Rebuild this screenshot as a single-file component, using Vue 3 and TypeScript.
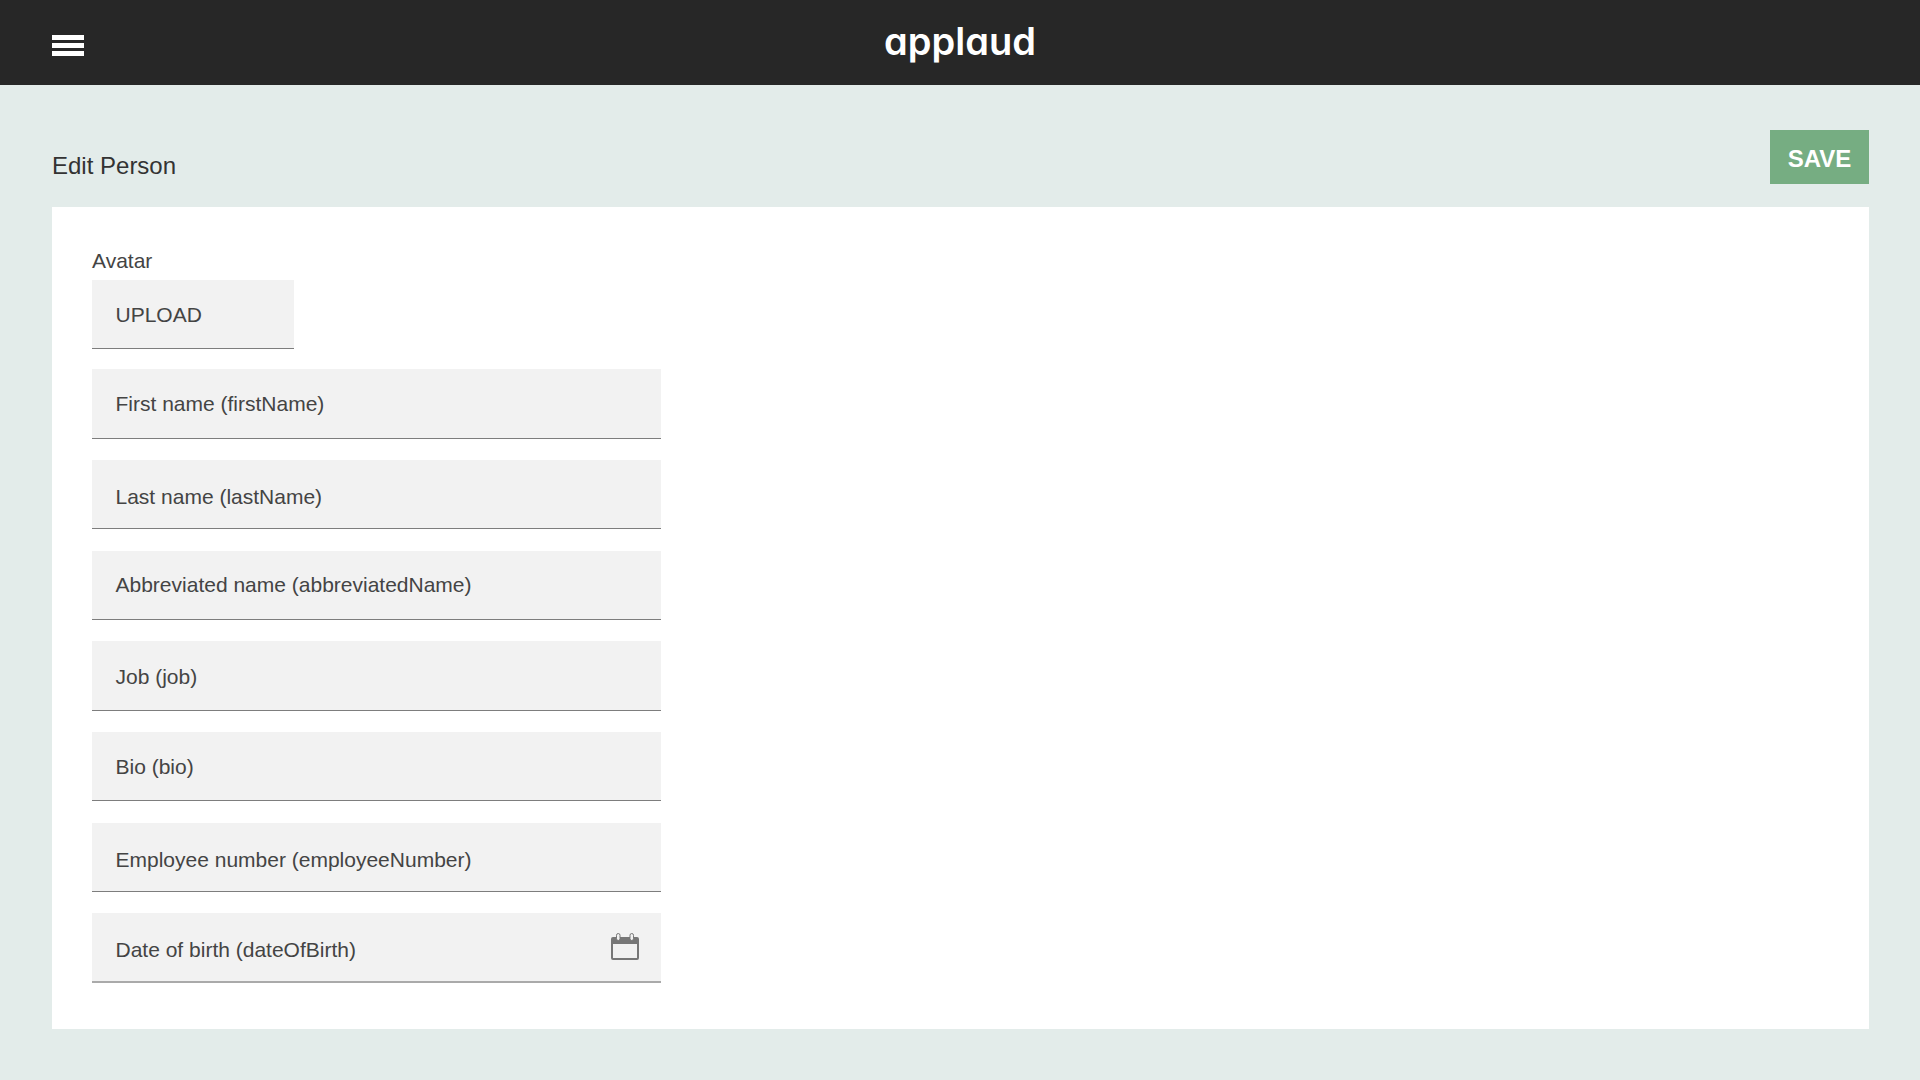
<script setup lang="ts">
const fields: { label: string; nudge: number }[] = [
  { label: "First name (firstName)", nudge: 0 },
  { label: "Last name (lastName)", nudge: 2 },
  { label: "Abbreviated name (abbreviatedName)", nudge: -1 },
  { label: "Job (job)", nudge: 1 },
  { label: "Bio (bio)", nudge: 0 },
  { label: "Employee number (employeeNumber)", nudge: 2 },
];
</script>

<template>
  <div class="page">
    <header class="topbar">
      <button class="menu-btn" aria-label="Menu">
        <span></span>
        <span></span>
        <span></span>
      </button>
      <div class="logo">applaud</div>
    </header>

    <main class="content">
      <div class="title-row">
        <h1 class="title">Edit Person</h1>
        <button class="save-btn">SAVE</button>
      </div>

      <section class="panel">
        <div class="avatar-label">Avatar</div>
        <div class="field upload">UPLOAD</div>
        <div
          v-for="f in fields"
          :key="f.label"
          class="field"
          :style="{ paddingTop: `${2 + f.nudge * 2}px` }"
        >
          {{ f.label }}
        </div>
        <div class="field field--date">
          <span>Date of birth (dateOfBirth)</span>
          <svg class="cal" width="28" height="27" viewBox="0 0 28 27">
            <path
              d="M2 4h24a2 2 0 0 1 2 2v19a2 2 0 0 1-2 2H2a2 2 0 0 1-2-2V6a2 2 0 0 1 2-2zM2 11v14h24V11z"
              fill="#777"
              fill-rule="evenodd"
            />
            <rect x="5.500" y="0.500" width="3.500" height="7" rx="1.750" fill="#f2f2f2" stroke="#777" />
            <rect x="19" y="0.500" width="3.500" height="7" rx="1.750" fill="#f2f2f2" stroke="#777" />
          </svg>
        </div>
      </section>
    </main>
  </div>
</template>

<style scoped>
.page {
  min-height: 1080px;
  background: #e3ecea;
  font-family: "Liberation Sans", Arial, sans-serif;
  color: #444;
  overflow: hidden;
}

.topbar {
  position: relative;
  height: 85px;
  background: #272727;
  display: flex;
  align-items: center;
  justify-content: center;
}
.menu-btn {
  position: absolute;
  left: 52px;
  top: 35px;
  width: 32px;
  padding: 0;
  border: none;
  background: none;
  display: flex;
  flex-direction: column;
  gap: 3px;
}
.menu-btn span {
  display: block;
  height: 5px;
  background: #fff;
}
.logo {
  font-family: Inter, sans-serif;
  font-feature-settings: "cv11";
  font-size: 38px;
  font-weight: 600;
  color: #fff;
  line-height: 1;
  margin-top: -4px;
}

.content {
  padding: 0 51px 0 52px;
}
.title-row {
  height: 122px;
  display: flex;
  align-items: flex-start;
  justify-content: space-between;
}
.title {
  margin: 65.500px 0 0;
  font-size: 24px;
  line-height: 30px;
  font-weight: 400;
  color: #333;
}
.save-btn {
  margin-top: 45px;
  width: 99px;
  height: 54px;
  padding: 3px 0 0;
  border: none;
  background: #76ad82;
  color: #fff;
  font-family: inherit;
  font-size: 24px;
  font-weight: 700;
}

.panel {
  height: 822px;
  box-sizing: border-box;
  background: #fff;
  padding: 37px 40px 0;
}
.avatar-label {
  font-size: 21px;
  line-height: 36px;
  margin-top: -1px;
  margin-bottom: 1px;
}
.field {
  box-sizing: border-box;
  width: 569px;
  height: 69.330px;
  margin-bottom: 21.330px;
  padding: 2px 23px 0 23.500px;
  background: #f2f2f2;
  border-bottom: 1.500px solid #7d7d7d;
  font-size: 21px;
  display: flex;
  align-items: center;
  justify-content: space-between;
}
.upload {
  width: 202px;
  margin-bottom: 20px;
}
.field--date {
  padding-top: 7px;
  padding-right: 22px;
  border-bottom: 2px solid #aaa;
}
.cal {
  flex: none;
  margin-bottom: 8px;
}
</style>
